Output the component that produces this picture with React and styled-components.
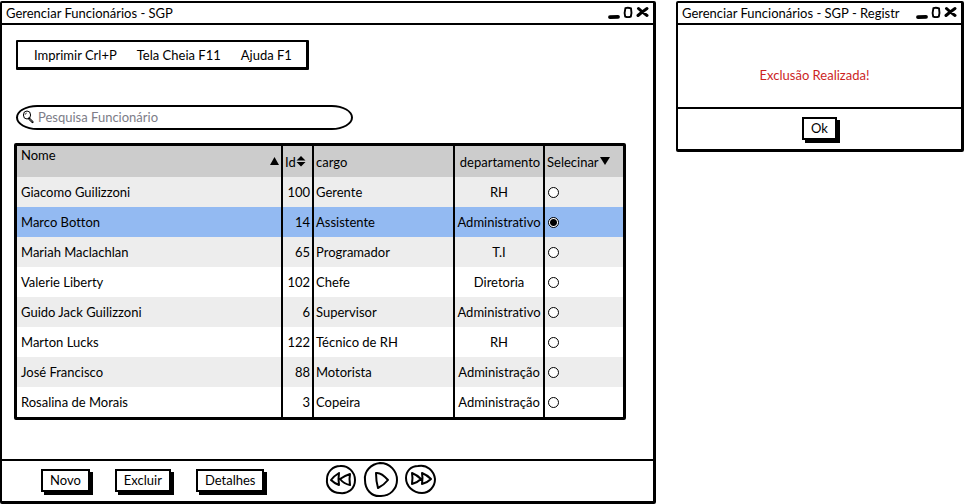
import React, { useState } from "react";
import styled, { createGlobalStyle } from "styled-components";

const GlobalStyle = createGlobalStyle`
  * { box-sizing: border-box; }
  body {
    margin: 0;
    background: #fff;
    color: #000;
    font: 13px/18px Lato, "Open Sans", sans-serif;
    font-variant-ligatures: none;
  }
  button, input { font: inherit; color: inherit; }
`;

const Desktop = styled.div`
  display: grid;
  grid-template-columns: 656fr 288fr;
  gap: 20px;
  align-items: start;
`;

const Window = styled.section`
  display: flex;
  flex-direction: column;
  min-width: 0;
  margin-top: 1px;
  border: 2px solid #000;
  border-right-width: 3px;
  border-bottom-width: 3px;
  border-radius: 2px;
`;

const TitleBar = styled.header`
  display: flex;
  align-items: center;
  height: 22px;
  padding: 0 4px;
  border-bottom: 2px solid #000;
`;

const Title = styled.h1`
  flex: 1;
  min-width: 0;
  margin: 0;
  overflow: hidden;
  white-space: nowrap;
  font-size: 13px;
  font-weight: 400;
  line-height: 18px;
`;

const Controls = styled.div`
  display: flex;
  gap: 3px;
`;

const ControlButton = styled.button`
  display: flex;
  padding: 0;
  border: 0;
  background: none;
`;

const Content = styled.main`
  display: flex;
  flex-direction: column;
  align-items: flex-start;
  padding: 15px 27px 39px 12px;
`;

const MenuBar = styled.nav`
  display: flex;
  gap: 20px;
  margin-left: 2px;
  padding: 3px 14px 2px 16px;
  border: 2px solid #000;
  border-right-width: 3px;
  border-bottom-width: 3px;
  border-radius: 1px;
`;

const MenuLink = styled.a`
  line-height: 20px;
  color: inherit;
  text-decoration: none;
  white-space: nowrap;
`;

const SearchBox = styled.label`
  display: flex;
  align-items: center;
  gap: 4px;
  width: 55%;
  height: 25px;
  margin: 35px 0 13px 2px;
  padding: 0 14px 2px 4px;
  border: 2px solid #000;
  border-radius: 22px / 13px;
`;

const SearchInput = styled.input`
  flex: 1;
  min-width: 0;
  padding: 0;
  border: 0;
  outline: 0;
  background: none;
  &::placeholder { color: #7d7d88; opacity: 1; }
`;

const Table = styled.table`
  width: 100%;
  table-layout: fixed;
  border: 3px solid #000;
  border-radius: 2px;
  border-spacing: 0;
`;

const Col = styled.col`
  width: ${(p) => p.$width || "auto"};
`;

const HeadCell = styled.th`
  height: 31px;
  padding: ${(p) => (p.$top ? "0 2px 0 4px" : "0 0 0 2px")};
  border-left: ${(p) => (p.$first ? "0" : "2px solid #000")};
  background: #ccc;
  font-weight: 400;
  text-align: ${(p) => p.$align || "left"};
  vertical-align: ${(p) => (p.$top ? "top" : "middle")};
  white-space: nowrap;
`;

const HeadLabel = styled.div`
  display: flex;
  align-items: ${(p) => (p.$spread ? "flex-start" : "center")};
  justify-content: ${(p) => (p.$spread ? "space-between" : "flex-start")};
`;

const SortMark = styled.svg`
  flex: none;
  margin-top: ${(p) => (p.$low ? "11px" : "0")};
`;

const Row = styled.tr`
  background: ${(p) => (p.$selected ? "#93baf2" : "#fff")};
  ${(p) => !p.$selected && "&:nth-child(odd) { background: #ededed; }"}
`;

const Cell = styled.td`
  height: 30px;
  padding: ${(p) => (p.$first ? "0 4px" : "0 2px")};
  border-left: ${(p) => (p.$first ? "0" : "2px solid #000")};
  text-align: ${(p) => p.$align || "left"};
  white-space: nowrap;
`;

const Radio = styled.input`
  display: block;
  appearance: none;
  width: 11px;
  height: 11px;
  margin: 0 1px;
  border: 1px solid #000;
  border-radius: 50%;
  background: #fff;
  &:checked { background: radial-gradient(circle, #000 0 3px, #fff 4px); }
`;

const Footer = styled.footer`
  display: flex;
  align-items: center;
  justify-content: ${(p) => (p.$centered ? "center" : "flex-start")};
  gap: 25px;
  height: 42px;
  padding: ${(p) => (p.$centered ? "0 0 2px" : "0 39px 2px")};
  border-top: 2px solid #000;
`;

const PushButton = styled.button`
  height: 23px;
  padding: 0 7px;
  border: 2px solid #000;
  border-radius: 0;
  background: #fff;
  box-shadow: 3px 3px 0 #000;
  line-height: 18px;
`;

const Player = styled.div`
  display: flex;
  align-items: center;
  gap: 6px;
  margin-left: 36px;
`;

const RoundButton = styled.button`
  display: flex;
  padding: 0;
  border: 0;
  background: none;
`;

const Message = styled.p`
  margin: 0;
  padding: 41px 10px 23px 0;
  color: #cc1f1f;
  text-align: center;
`;

const people = [
  ["Giacomo Guilizzoni", 100, "Gerente", "RH"],
  ["Marco Botton", 14, "Assistente", "Administrativo"],
  ["Mariah Maclachlan", 65, "Programador", "T.I"],
  ["Valerie Liberty", 102, "Chefe", "Diretoria"],
  ["Guido Jack Guilizzoni", 6, "Supervisor", "Administrativo"],
  ["Marton Lucks", 122, "Técnico de RH", "RH"],
  ["José Francisco", 88, "Motorista", "Administração"],
  ["Rosalina de Morais", 3, "Copeira", "Administração"],
];

function WindowTitle({ children }) {
  return (
    <TitleBar>
      <Title>{children}</Title>
      <Controls>
        <ControlButton aria-label="Minimizar">
          <svg width="12" height="14" fill="none" stroke="#000">
            <path d="M2 11.2 L10 10.8" strokeWidth="3.8" strokeLinecap="round" />
          </svg>
        </ControlButton>
        <ControlButton aria-label="Maximizar">
          <svg width="10" height="14" fill="none" stroke="#000">
            <path d="M2.4 2.2 Q5 1.2 8 2.4 Q9 7 7.8 10.6 Q5 11.6 2.2 10.6 Q1 7 2.4 2.2Z" strokeWidth="1.9" />
          </svg>
        </ControlButton>
        <ControlButton aria-label="Fechar">
          <svg width="13" height="14" fill="none" stroke="#000">
            <path d="M2.5 2.5 Q6 6 11 9.5 M11 2.5 Q6 6 2 9.5" strokeWidth="3" strokeLinecap="round" />
          </svg>
        </ControlButton>
      </Controls>
    </TitleBar>
  );
}

function EmployeeTable() {
  const [selected, setSelected] = useState(1);
  return (
    <Table>
      <colgroup>
        <Col />
        <Col $width="31px" />
        <Col $width="141px" />
        <Col $width="90px" />
        <Col $width="80px" />
      </colgroup>
      <thead>
        <tr>
          <HeadCell $first $top>
            <HeadLabel $spread>
              Nome
              <SortMark $low width="9" height="9"><path d="M4.5 0 L9 8 H0Z" /></SortMark>
            </HeadLabel>
          </HeadCell>
          <HeadCell>
            <HeadLabel>
              Id
              <SortMark width="10" height="11"><path d="M5 0 L9.5 4.5 H.5Z M.5 6 H9.5 L5 10.5Z" /></SortMark>
            </HeadLabel>
          </HeadCell>
          <HeadCell>cargo</HeadCell>
          <HeadCell $align="center">departamento</HeadCell>
          <HeadCell>
            <HeadLabel>
              Selecinar
              <SortMark width="11" height="9"><path d="M1 0 H11 L6 8Z" /></SortMark>
            </HeadLabel>
          </HeadCell>
        </tr>
      </thead>
      <tbody>
        {people.map(([name, id, role, department], i) => (
          <Row key={id} $selected={i === selected}>
            <Cell $first>{name}</Cell>
            <Cell $align="right">{id}</Cell>
            <Cell>{role}</Cell>
            <Cell $align="center">{department}</Cell>
            <Cell>
              <Radio
                type="radio"
                name="employee"
                aria-label={name}
                checked={i === selected}
                onChange={() => setSelected(i)}
              />
            </Cell>
          </Row>
        ))}
      </tbody>
    </Table>
  );
}

export default function App() {
  return (
    <>
      <GlobalStyle />
      <Desktop>
        <Window>
          <WindowTitle>Gerenciar Funcionários - SGP</WindowTitle>
          <Content>
            <MenuBar>
              <MenuLink href="#imprimir">Imprimir Crl+P</MenuLink>
              <MenuLink href="#tela">Tela Cheia F11</MenuLink>
              <MenuLink href="#ajuda">Ajuda F1</MenuLink>
            </MenuBar>
            <SearchBox>
              <svg width="12" height="14" fill="none" stroke="#000">
                <ellipse cx="5" cy="5" rx="3.6" ry="4" />
                <path d="M3 5 Q3 3 5 3" strokeWidth=".6" />
                <path d="M7 8.5 L10.5 12" strokeWidth="2.2" strokeLinecap="round" />
                <path d="M7.5 9 L10.3 11.8" stroke="#fff" strokeWidth=".6" />
              </svg>
              <SearchInput type="search" aria-label="Pesquisa Funcionário" placeholder="Pesquisa Funcionário" />
            </SearchBox>
            <EmployeeTable />
          </Content>
          <Footer>
            <PushButton>Novo</PushButton>
            <PushButton>Excluir</PushButton>
            <PushButton>Detalhes</PushButton>
            <Player>
              <RoundButton aria-label="Anterior">
                <svg width="32" height="32" fill="none" stroke="#000" strokeWidth="2" strokeLinejoin="round">
                  <path d="M15 2 C23 1 30 8 30 16 C30 25 23 30 15 29 C7 29 1 23 2 15 C2 8 8 2 15 2Z" />
                  <path d="M14 9 Q9 12 6 16 Q9 19 14 21 Q13 15 14 9Z M25 10 Q19 12 15 15 Q19 20 25 21 Q24 15 25 10Z" />
                </svg>
              </RoundButton>
              <RoundButton aria-label="Reproduzir">
                <svg width="36" height="36" fill="none" stroke="#000" strokeWidth="2" strokeLinejoin="round">
                  <path d="M17 1 C27 1 34 9 34 18 C34 27 27 34 18 34 C8 35 2 27 2 18 C1 9 8 2 17 1Z" />
                  <path d="M13 11 Q18 10 25 18 Q21 23 15 26 Q13 19 13 11Z" />
                </svg>
              </RoundButton>
              <RoundButton aria-label="Próximo">
                <svg width="32" height="32" fill="none" stroke="#000" strokeWidth="2" strokeLinejoin="round">
                  <path d="M13 2 C22 0 29 7 30 15 C30 23 24 29 17 29 C8 29 1 22 1 14 C1 7 6 2 13 2Z" />
                  <path d="M7 9 Q12 11 16 15 Q12 19 7 20 Q8 14 7 9Z M17 9 Q22 11 26 15 Q22 19 17 20 Q18 14 17 9Z" />
                </svg>
              </RoundButton>
            </Player>
          </Footer>
        </Window>

        <Window role="dialog">
          <WindowTitle>Gerenciar Funcionários - SGP - Registr</WindowTitle>
          <Message role="status">Exclusão Realizada!</Message>
          <Footer $centered>
            <PushButton>Ok</PushButton>
          </Footer>
        </Window>
      </Desktop>
    </>
  );
}
